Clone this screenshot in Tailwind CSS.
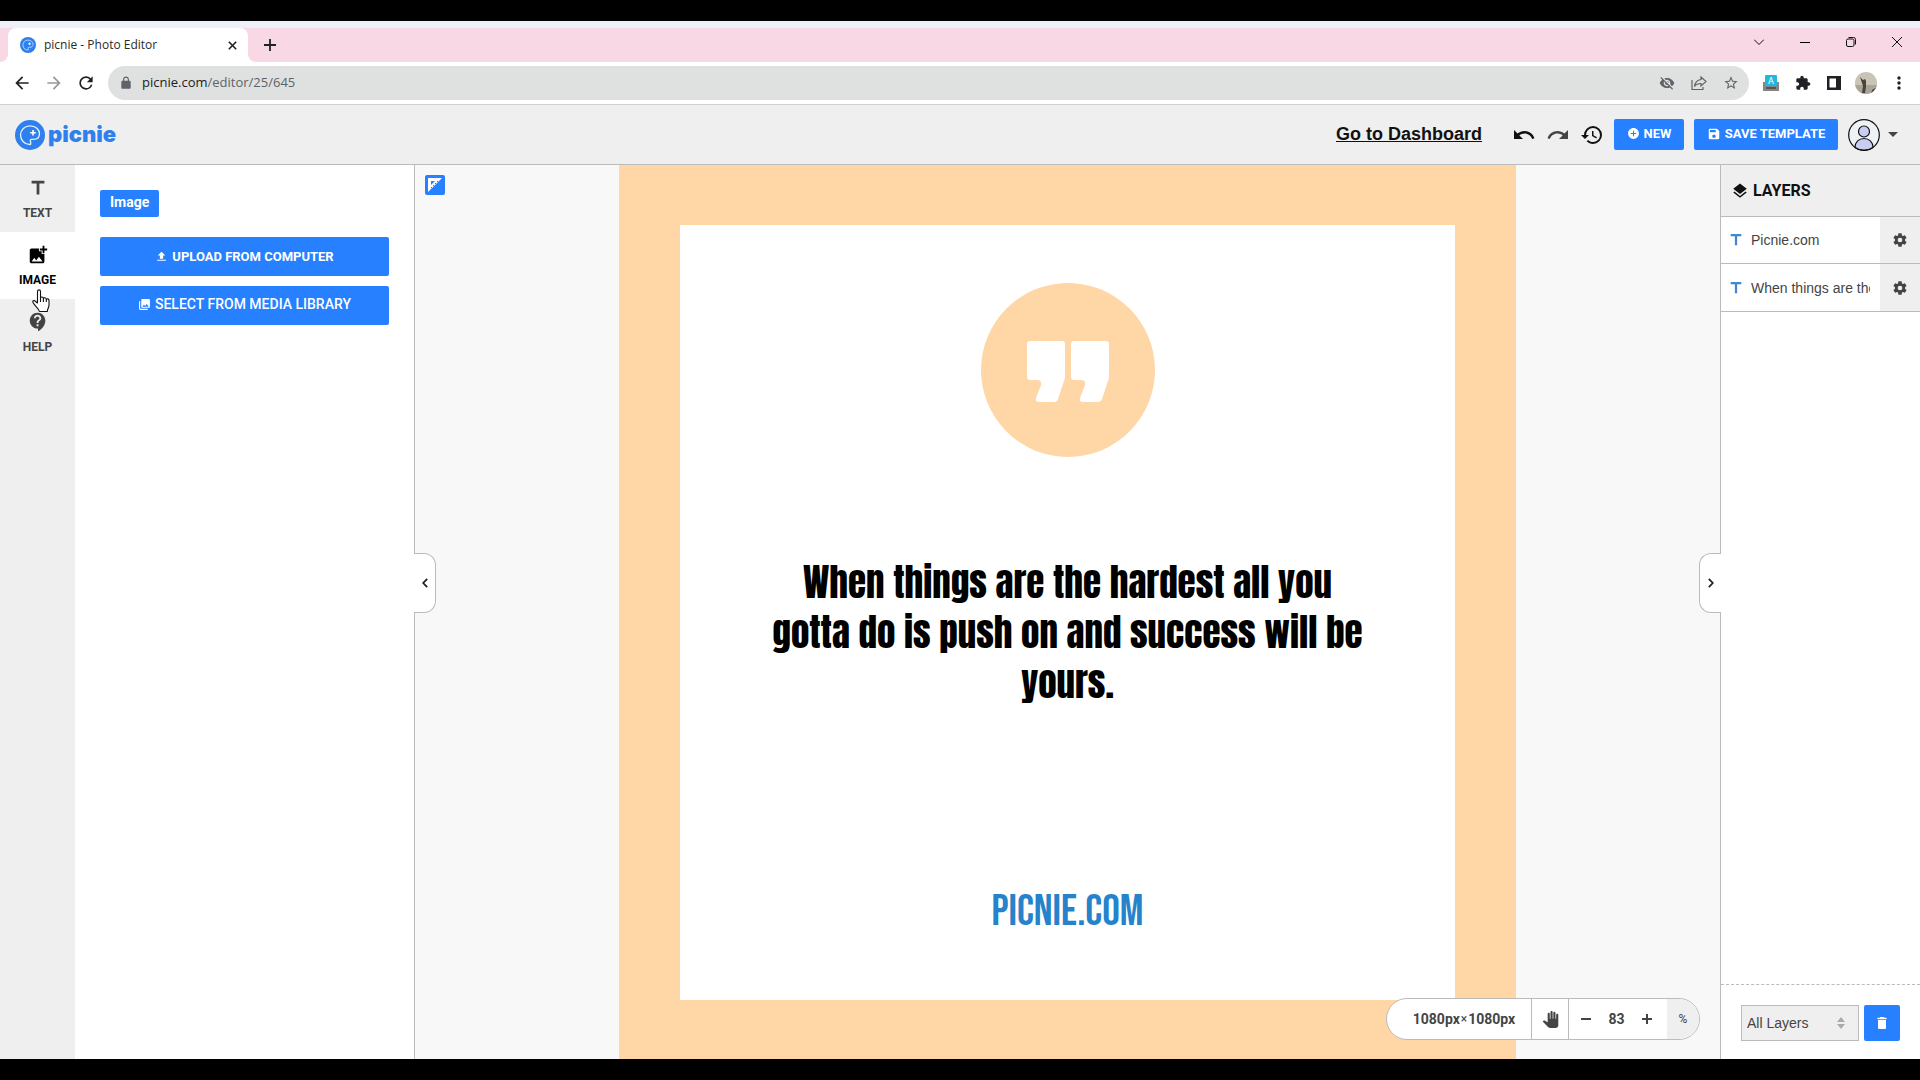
<!DOCTYPE html>
<html lang="en">
<head>
    <meta charset="UTF-8">
    <meta name="viewport" content="width=device-width, initial-scale=1.0">
    <title>picnie - Photo Editor</title>
    <script src="https://cdn.jsdelivr.net/npm/@tailwindcss/browser@4"></script>
</head>
<body class="flex h-screen flex-col overflow-hidden bg-black font-['Roboto',sans-serif] text-[#444]">

    <!-- Shared icons -->
    <svg class="hidden">
        <symbol id="palette" viewBox="0 0 30 30">
            <circle cx="15" cy="15" r="15" fill="#2f80ed"/>
            <path d="M15 24.500C9.500 24.500 5.500 20.300 5.500 15S9.700 5.800 15.200 5.800c5.400 0 9.300 3.600 9.300 8 0 3.700-2.700 5.600-6 5.600h-1.800c-1.300 0-1.600.9-1.300 1.900.5 1.700.8 3.200-.4 3.200z" fill="none" stroke="#e6f3ff" stroke-width="1.300"/>
            <path d="M18 10v5.500M15.200 12.700h5.600" stroke="#fff" stroke-width="1.600"/>
        </symbol>
        <symbol id="title" viewBox="0 0 24 24"><path d="M5 4v3h5.500v12h3V7H19V4z"/></symbol>
        <symbol id="gear" viewBox="0 0 24 24"><path d="M12,15.500A3.500,3.500 0 0,1 8.500,12A3.500,3.500 0 0,1 12,8.500A3.500,3.500 0 0,1 15.500,12A3.500,3.500 0 0,1 12,15.500M19.430,12.970C19.470,12.650 19.500,12.330 19.500,12C19.500,11.670 19.470,11.340 19.430,11L21.540,9.370C21.730,9.220 21.780,8.950 21.660,8.730L19.660,5.270C19.540,5.050 19.270,4.960 19.050,5.050L16.560,6.050C16.040,5.660 15.500,5.320 14.870,5.070L14.500,2.420C14.460,2.180 14.250,2 14,2H10C9.750,2 9.540,2.180 9.500,2.420L9.130,5.070C8.500,5.320 7.960,5.660 7.440,6.050L4.950,5.050C4.730,4.960 4.460,5.050 4.340,5.270L2.340,8.730C2.210,8.950 2.270,9.220 2.460,9.370L4.570,11C4.530,11.340 4.500,11.670 4.500,12C4.500,12.330 4.530,12.650 4.570,12.970L2.460,14.630C2.270,14.780 2.210,15.050 2.340,15.270L4.340,18.730C4.460,18.950 4.730,19.030 4.950,18.950L7.440,17.940C7.960,18.340 8.500,18.680 9.130,18.930L9.500,21.580C9.540,21.820 9.750,22 10,22H14C14.250,22 14.460,21.820 14.500,21.580L14.870,18.930C15.500,18.670 16.040,18.340 16.560,17.940L19.050,18.950C19.270,19.030 19.540,18.950 19.660,18.730L21.660,15.270C21.780,15.050 21.730,14.780 21.540,14.630L19.430,12.970Z"/></symbol>
    </svg>

    <div class="h-[21px] shrink-0"></div>

    <!-- Browser window -->
    <div class="flex min-h-0 flex-1 flex-col bg-white">

        <!-- Tab strip -->
        <div class="h-[7px] shrink-0 bg-[#edf1f7]"></div>
        <div class="flex h-[34px] shrink-0 items-stretch bg-white">
            <div class="w-2 rounded-br-lg bg-[#f8d8e4]"></div>
            <div class="flex bg-[#f8d8e4]">
                <div class="flex w-60 items-center rounded-t-lg bg-white pr-2 pl-3 font-['Open_Sans',sans-serif] text-xs text-[#2b2b2b]">
                    <svg class="size-4"><use href="#palette"/></svg>
                    <span class="ml-2 flex-1">picnie - Photo Editor</span>
                    <button aria-label="Close tab" class="grid size-4 place-items-center"><svg class="size-[9px]" viewBox="0 0 9 9" stroke="#202124" stroke-width="1.600"><path d="M.8.8l7.400 7.400M8.200.8L.8 8.200"/></svg></button>
                </div>
            </div>
            <div class="flex flex-1 items-center rounded-bl-lg bg-[#f8d8e4] pl-4">
                <button aria-label="New tab"><svg class="size-3" viewBox="0 0 12 12" stroke="#202124" stroke-width="1.800"><path d="M6 0v12M0 6h12"/></svg></button>
                <div class="ml-auto flex items-center gap-[36px] pr-[18px] pb-1.5">
                    <button aria-label="Search tabs"><svg class="size-[10px]" viewBox="0 0 10 10" fill="none" stroke="#111"><path d="M0 2.500l5 5 5-5"/></svg></button>
                    <button aria-label="Minimize"><svg class="size-[10px]" viewBox="0 0 10 10"><path d="M0 5h10v1H0z"/></svg></button>
                    <button aria-label="Restore"><svg class="size-[10px]" viewBox="0 0 10 10" fill="none" stroke="#111"><rect x=".5" y="2" width="7.500" height="7.500" rx="1.500"/><path d="M2.500.500h5a2 2 0 0 1 2 2v5"/></svg></button>
                    <button aria-label="Close"><svg class="size-[10px]" viewBox="0 0 10 10" stroke="#111"><path d="M0 0l10 10M10 0L0 10"/></svg></button>
                </div>
            </div>
        </div>

        <!-- Address bar -->
        <div class="flex h-[43px] shrink-0 items-center border-b border-[#cfcfcf] pr-[11px] pl-3 text-[#202124]">
            <button aria-label="Back"><svg class="size-5" viewBox="0 0 24 24" fill="currentColor"><path d="M20 11H7.830l5.590-5.590L12 4l-8 8 8 8 1.410-1.410L7.830 13H20z"/></svg></button>
            <button aria-label="Forward" class="ml-3 text-[#999]"><svg class="size-5" viewBox="0 0 24 24" fill="currentColor"><path d="M4 11h12.170l-5.590-5.590L12 4l8 8-8 8-1.410-1.410L16.170 13H4z"/></svg></button>
            <button aria-label="Reload" class="ml-3"><svg class="size-5" viewBox="0 0 24 24" fill="currentColor"><path d="M17.650 6.350A7.958 7.958 0 0 0 12 4a8 8 0 1 0 7.730 10h-2.080A5.990 5.990 0 0 1 12 18a6 6 0 1 1 0-12c1.660 0 3.140.69 4.220 1.780L13 11h7V4l-2.350 2.350z"/></svg></button>
            <div class="ml-3 flex h-[34px] flex-1 items-center rounded-full bg-[#dee1e0] pr-[10px] pl-[11px] text-[#5f6368]">
                <svg class="size-[14px]" viewBox="0 0 24 24" fill="currentColor"><path d="M18 8h-1V6c0-2.760-2.240-5-5-5S7 3.240 7 6v2H6c-1.100 0-2 .9-2 2v10c0 1.100.9 2 2 2h12c1.100 0 2-.9 2-2V10c0-1.100-.9-2-2-2zM9 6c0-1.660 1.340-3 3-3s3 1.340 3 3v2H9V6z"/></svg>
                <p class="ml-[9px] flex-1 font-['Open_Sans',sans-serif] text-[13px]"><span class="text-[#202124]">picnie.com</span>/editor/25/645</p>
                <div class="flex items-center gap-4">
                    <svg class="size-4" viewBox="0 0 24 24" fill="currentColor"><path d="M12 7c2.760 0 5 2.240 5 5 0 .65-.13 1.260-.36 1.830l2.920 2.920c1.510-1.260 2.700-2.890 3.430-4.750-1.730-4.390-6-7.500-11-7.500-1.400 0-2.740.25-3.980.7l2.160 2.160C10.740 7.130 11.350 7 12 7zM2 4.270l2.740 2.740C3.080 8.300 1.780 10.020 1 12c1.730 4.390 6 7.500 11 7.500 1.550 0 3.030-.3 4.380-.84L19.730 22 21 20.730 3.270 3 2 4.270zM7.530 9.800l1.550 1.550c-.05.21-.08.43-.08.65 0 1.660 1.340 3 3 3 .22 0 .44-.03.65-.08l1.550 1.550c-.67.33-1.410.53-2.200.53-2.760 0-5-2.240-5-5 0-.79.2-1.530.53-2.200zm4.310-.78l3.150 3.150.02-.16c0-1.660-1.340-3-3-3l-.17.01z"/></svg>
                    <svg class="size-4" viewBox="0 0 16 16" fill="none" stroke="currentColor" stroke-width="1.200"><path d="M1 5v9.500h11V12M10 2l5 4.500-5 4.500V8.500c-3 0-5 .8-6.500 3C4 7.500 6 5 10 4.500z"/></svg>
                    <svg class="size-4" viewBox="0 0 24 24" fill="currentColor"><path d="M22 9.240l-7.190-.62L12 2 9.190 8.630 2 9.240l5.460 4.730L5.820 21 12 17.270 18.180 21l-1.630-7.030L22 9.240zM12 15.400l-3.760 2.270 1-4.280-3.320-2.880 4.380-.38L12 6.100l1.710 4.040 4.380.38-3.320 2.880 1 4.280L12 15.400z"/></svg>
                </div>
            </div>
            <svg class="ml-[14px] h-4 w-4" viewBox="0 0 16 16"><path d="M0 7h16v9H0z" fill="#858585"/><path d="M3 12h10v2H3z" fill="#555"/><rect x="2" width="12" height="11" rx="1" fill="#22b8dc"/><text x="8" y="9" text-anchor="middle" font-size="9" fill="#fff" font-family="Roboto">A</text></svg>
            <svg class="ml-4 size-4" viewBox="0 0 24 24" fill="currentColor"><path d="M20.500 11H19V7c0-1.100-.9-2-2-2h-4V3.500C13 2.120 11.880 1 10.500 1S8 2.120 8 3.500V5H4c-1.100 0-1.990.9-1.990 2v3.800H3.500c1.490 0 2.700 1.210 2.700 2.700s-1.210 2.700-2.700 2.700H2V20c0 1.100.9 2 2 2h3.800v-1.500c0-1.490 1.210-2.700 2.700-2.700s2.700 1.210 2.700 2.700V22H17c1.100 0 2-.9 2-2v-4h1.500c1.380 0 2.500-1.120 2.500-2.500S21.880 11 20.500 11z"/></svg>
            <svg class="ml-4 size-[14px]" viewBox="0 0 14 14" fill="currentColor"><path fill-rule="evenodd" d="M0 0h14v14H0zM2.500 2.500v9H9v-9z"/></svg>
            <svg class="ml-[14px] size-[22px] rounded-full" viewBox="0 0 22 22"><path d="M0 0h22v22H0z" fill="#c9c4b6"/><path d="M0 13h22v9H0z" fill="#aaa598"/><path d="M5 5l3 3 2-1 1 2v6l-1 6H7l1-7zM17 18l5-3v8h-6z" fill="#4b423a"/></svg>
            <button aria-label="Browser menu" class="ml-3"><svg class="size-5" viewBox="0 0 20 20" fill="currentColor"><circle cx="10" cy="5" r="1.700"/><circle cx="10" cy="10" r="1.700"/><circle cx="10" cy="15" r="1.700"/></svg></button>
        </div>

        <!-- App header -->
        <header class="flex h-[60px] shrink-0 items-center border-b border-[#bbb] bg-[#efefef] pr-[22px] pl-[15px]">
            <a href="#" class="flex items-center gap-[3px]">
                <svg class="size-[30px]"><use href="#palette"/></svg>
                <span class="pb-0.5 font-['Inter',sans-serif] text-[22px] leading-7 font-black text-[#2f80ed]">picnie</span>
            </a>
            <a href="#" class="ml-auto pb-0.5 font-['Liberation_Sans',sans-serif] text-lg font-bold text-[#111] underline">Go to Dashboard</a>
            <div class="ml-[30px] flex items-center gap-2.5 text-[#111]">
                <button aria-label="Undo"><svg class="size-6" viewBox="0 0 24 24" fill="currentColor"><path d="M12.500,8C9.850,8 7.450,9 5.600,10.600L2,7V16H11L7.380,12.380C8.770,11.220 10.540,10.500 12.500,10.500C16.040,10.500 19.050,12.810 20.100,16L22.470,15.220C21.080,11.030 17.150,8 12.500,8Z"/></svg></button>
                <button aria-label="Redo" class="text-[#444]"><svg class="size-6" viewBox="0 0 24 24" fill="currentColor"><path d="M18.400,10.600C16.550,9 14.150,8 11.500,8C6.850,8 2.920,11.030 1.540,15.220L3.900,16C4.950,12.810 7.950,10.500 11.500,10.500C13.450,10.500 15.230,11.220 16.620,12.380L13,16H22V7L18.400,10.600Z"/></svg></button>
                <button aria-label="History"><svg class="size-6" viewBox="0 0 24 24" fill="currentColor"><path d="M13.500,8H12V13L16.280,15.540L17,14.330L13.500,12.250V8M13,3A9,9 0 0,0 4,12H1L4.960,16.030L9,12H6A7,7 0 0,1 13,5A7,7 0 0,1 20,12A7,7 0 0,1 13,19C11.070,19 9.320,18.210 8.060,16.940L6.640,18.360C8.270,20 10.500,21 13,21A9,9 0 0,0 22,12A9,9 0 0,0 13,3"/></svg></button>
            </div>
            <button class="ml-2.5 flex h-[31px] w-[70px] items-center justify-center gap-1 rounded-xs bg-[#2680ff] pb-0.5 text-[13px] font-bold text-white">
                <svg class="size-[13px]" viewBox="0 0 24 24" fill="currentColor"><path d="M12 2C6.480 2 2 6.480 2 12s4.480 10 10 10 10-4.480 10-10S17.520 2 12 2zm5 11h-4v4h-2v-4H7v-2h4V7h2v4h4v2z"/></svg>NEW
            </button>
            <button class="ml-2.5 flex h-[31px] w-36 items-center justify-center gap-1 rounded-xs bg-[#2680ff] pb-0.5 text-[13px] font-bold text-white">
                <svg class="size-[14px]" viewBox="0 0 24 24" fill="currentColor"><path d="M17 3H5c-1.110 0-2 .9-2 2v14c0 1.100.89 2 2 2h14c1.100 0 2-.9 2-2V7l-4-4zm-5 16c-1.660 0-3-1.340-3-3s1.340-3 3-3 3 1.340 3 3-1.340 3-3 3zm3-10H5V5h10v4z"/></svg>SAVE TEMPLATE
            </button>
            <button aria-label="Account" class="ml-2.5 flex items-center gap-2">
                <svg class="size-8" viewBox="0 0 32 32"><circle cx="16" cy="16" r="15.300" fill="#eef2f6"/><g fill="#c9cdf2" stroke="#111" stroke-width="1.200"><circle cx="16" cy="12.500" r="5.500"/><path d="M7 28.500c0-5.500 4-9 9-9s9 3.500 9 9a15.300 15.300 0 0 1-18 0z"/></g><circle cx="16" cy="16" r="15.300" fill="none" stroke="#111" stroke-width="1.200"/></svg>
                <svg class="h-[5px] w-[10px]" viewBox="0 0 10 5" fill="#444"><path d="M0 0h10L5 5z"/></svg>
            </button>
        </header>

        <!-- Editor -->
        <div class="flex min-h-0 flex-1">

            <!-- Tool tabs -->
            <nav class="relative w-[75px] shrink-0 bg-[#efefef] text-xs font-bold">
                <button class="flex h-[67px] w-full flex-col items-center gap-1.5 pt-3">
                    <svg class="size-[22px]" fill="currentColor"><use href="#title"/></svg>TEXT
                </button>
                <button class="flex h-[67px] w-full flex-col items-center gap-1.5 bg-white pt-3 text-black">
                    <svg class="size-[22px]" viewBox="0 0 24 24" fill="currentColor"><path d="M19 7v3h-2V7h-3V5h3V2h2v3h3v2h-3zm-3 4V8h-3V5H5c-1.100 0-2 .9-2 2v12c0 1.100.9 2 2 2h12c1.100 0 2-.9 2-2v-8h-3zM5 19l3-4 2 3 3-4 4 5H5z"/></svg>IMAGE
                </button>
                <button class="flex h-[67px] w-full flex-col items-center gap-1.5 pt-3">
                    <svg class="size-[22px]" viewBox="0 0 24 24" fill="currentColor"><path d="M11.500 2C6.810 2 3 5.810 3 10.500S6.810 19 11.500 19h.5v3c4.860-2.340 8-7 8-11.500C20 5.810 16.190 2 11.500 2zm1 14.500h-2v-2h2v2zm0-3.500h-2c0-3.250 3-3 3-5 0-1.100-.9-2-2-2s-2 .9-2 2h-2c0-2.210 1.790-4 4-4s4 1.790 4 4c0 2.500-3 2.750-3 5z"/></svg>HELP
                </button>
                <!-- Hand cursor -->
                <svg class="absolute top-[124px] left-8 h-6 w-[18px]" viewBox="0 0 18 24" fill="#fff" stroke="#111" stroke-width="1.100" stroke-linejoin="round"><path d="M5.500 14V2.500C5.500.3 8.500.3 8.500 2.500V9c.3-1.500 2.800-1.300 2.900.5.500-1.200 2.800-.9 2.900.8.700-.9 2.700-.6 2.700 1.200V16c0 2.500-1.500 3.500-1.700 6.500H7.500C7 20 3 17 1 13.500c-.7-1.500 1-2.500 2.300-1.300z"/><path d="M8.500 9v4M11.400 9.500V13M14.300 10.300V13"/></svg>
            </nav>

            <!-- Image panel -->
            <aside class="flex w-[340px] shrink-0 flex-col items-start border-r border-[#bbb] px-[25px] pt-[25px]">
                <h2 class="h-[27px] rounded-xs bg-[#2680ff] px-2.5 text-sm leading-[25px] font-bold text-white">Image</h2>
                <button class="mt-5 flex h-[39px] w-full items-center justify-center gap-1 rounded-xs bg-[#2680ff] text-[13px] font-bold text-white">
                    <svg class="size-[13px]" viewBox="0 0 24 24" fill="currentColor"><path d="M9 16h6v-6h4l-7-7-7 7h4zm-5 2h16v2H4z"/></svg>UPLOAD FROM COMPUTER
                </button>
                <button class="mt-2.5 flex h-[39px] w-full items-center justify-center gap-1 rounded-xs bg-[#2680ff] pb-[3px] text-sm font-medium text-white">
                    <svg class="size-[13px]" viewBox="0 0 24 24" fill="currentColor"><path d="M22 16V4c0-1.100-.9-2-2-2H8c-1.100 0-2 .9-2 2v12c0 1.100.9 2 2 2h12c1.100 0 2-.9 2-2zm-11-4l2.030 2.710L16 11l4 5H8l3-4zM2 6v14c0 1.100.9 2 2 2h14v-2H4V6H2z"/></svg>SELECT FROM MEDIA LIBRARY
                </button>
            </aside>

            <!-- Workspace -->
            <main class="relative flex min-w-0 flex-1 justify-center bg-[#f8f8f8]">
                <button aria-label="Toggle ruler" class="absolute top-[10px] left-[10px] grid size-5 place-items-center rounded-xs bg-[#2680ff]">
                    <svg class="size-[14px]" viewBox="0 0 14 14"><path fill="#fff" fill-rule="evenodd" d="M0 0h14L0 14zM3 3v4l4-4z"/><path d="M3 9l1 1M5 7l1 1M7 5l1 1M9 3l1 1" stroke="#2680ff"/></svg>
                </button>
                <button aria-label="Collapse panel" class="absolute top-[388px] -left-px grid h-[60px] w-[22px] place-items-center rounded-r-xl border border-l-0 border-[#bbb] bg-white">
                    <svg class="h-[10px] w-[6px]" viewBox="0 0 6 10" fill="none" stroke="#222" stroke-width="1.800"><path d="M5.200.8L1.200 5l4 4.200"/></svg>
                </button>
                <button aria-label="Collapse layers" class="absolute top-[388px] -right-px grid h-[60px] w-[22px] place-items-center rounded-l-xl border border-r-0 border-[#bbb] bg-white">
                    <svg class="h-[10px] w-[6px]" viewBox="0 0 6 10" fill="none" stroke="#222" stroke-width="1.800"><path d="M.8.8l4 4.200-4 4.200"/></svg>
                </button>

                <!-- Artboard -->
                <div class="flex w-[897px] bg-[#ffd6a6] px-[61px] pt-[60px] pb-[59px]">
                    <div class="flex flex-1 flex-col items-center bg-white pt-[58px]">
                        <svg class="size-[174px] shrink-0" viewBox="0 0 174 174"><circle cx="87" cy="87" r="87" fill="#ffd6a6"/><path id="mark" fill="#fff" d="M49 58h32q3 0 3 3v34l-7 21q-1 3-4 3H58q-4 0-3-4l5-13q1-5-4-5h-7q-3 0-3-3V61q0-3 3-3z"/><use href="#mark" x="44"/></svg>
                        <p class="mt-[100px] w-[600px] text-center font-['Anton','Roboto_Condensed',sans-serif] text-[37px] leading-[50px] text-black">When things are the hardest all you gotta do is push on and success will be yours.</p>
                        <p class="mt-[179px] font-['Bebas_Neue','Roboto_Condensed',sans-serif] text-[44px] leading-[52px] text-[#2683cb]">PICNIE.COM</p>
                    </div>
                </div>

                <!-- Zoom bar -->
                <div class="absolute right-5 bottom-[19px] flex h-[42px] w-[314px] items-stretch overflow-hidden rounded-full border border-[#bbb] bg-white text-sm font-bold">
                    <div class="flex flex-1 items-center justify-center gap-px border-r border-[#bbb] pl-2.5">1080px<span class="text-xs font-normal">×</span>1080px</div>
                    <button aria-label="Pan" class="grid w-[37px] place-items-center border-r border-[#bbb]"><svg class="size-[17px]" viewBox="0 0 24 24" fill="currentColor"><path d="M23 5.500V20c0 2.200-1.800 4-4 4h-7.300c-1.080 0-2.100-.43-2.850-1.190L1 14.830s1.260-1.230 1.300-1.250c.22-.19.49-.29.79-.29.22 0 .42.06.6.16.04.01 4.310 2.460 4.310 2.460V4c0-.83.67-1.500 1.500-1.500S11 3.170 11 4v7h1V1.500c0-.83.67-1.500 1.500-1.500S15 .67 15 1.500V11h1V2.500c0-.83.67-1.500 1.500-1.500s1.500.67 1.500 1.500V11h1V5.500c0-.83.67-1.500 1.500-1.500s1.500.67 1.500 1.500z"/></svg></button>
                    <div class="flex w-[98px] items-center justify-between pr-[15px] pl-3">
                        <button aria-label="Zoom out"><svg class="size-[10px]" viewBox="0 0 10 10" fill="currentColor"><path d="M0 4h10v2H0z"/></svg></button>
                        <input aria-label="Zoom" value="83" class="w-8 text-center outline-none">
                        <button aria-label="Zoom in"><svg class="size-[10px]" viewBox="0 0 10 10" fill="currentColor"><path d="M4 0h2v4h4v2H6v4H4V6H0V4h4z"/></svg></button>
                    </div>
                    <div class="flex w-8 items-center justify-center bg-[#efefef] text-xs font-normal">%</div>
                </div>
            </main>

            <!-- Layers -->
            <aside class="flex w-[200px] shrink-0 flex-col border-l border-[#bbb] bg-white">
                <h2 class="flex h-[52px] items-center gap-1 border-b border-[#bbb] bg-[#efefef] pl-2.5 text-base font-bold text-[#111]">
                    <svg class="size-[18px]" viewBox="0 0 24 24" fill="currentColor"><path d="M11.990 18.540l-7.370-5.730L3 14.070l9 7 9-7-1.630-1.270-7.380 5.740zM12 16l7.360-5.730L21 9l-9-7-9 7 1.630 1.270L12 16z"/></svg>LAYERS
                </h2>
                <ul class="font-['Liberation_Sans',sans-serif] text-sm">
                    <li class="flex h-[47px] items-center border-b border-[#bbb]">
                        <svg class="ml-1.5 size-[18px] shrink-0" fill="#3f87d0"><use href="#title"/></svg>
                        <span class="mr-2.5 ml-1.5 flex-1 overflow-hidden whitespace-nowrap">Picnie.com</span>
                        <button aria-label="Layer settings" class="grid h-full w-10 shrink-0 place-items-center bg-[#efefef]"><svg class="size-4" fill="currentColor"><use href="#gear"/></svg></button>
                    </li>
                    <li class="flex h-12 items-center border-b border-[#bbb]">
                        <svg class="ml-1.5 size-[18px] shrink-0" fill="#3f87d0"><use href="#title"/></svg>
                        <span class="mr-2.5 ml-1.5 flex-1 overflow-hidden whitespace-nowrap">When things are the hardest</span>
                        <button aria-label="Layer settings" class="grid h-full w-10 shrink-0 place-items-center bg-[#efefef]"><svg class="size-4" fill="currentColor"><use href="#gear"/></svg></button>
                    </li>
                </ul>
                <div class="mt-auto flex gap-[5px] border-t border-dashed border-[#bbb] px-5 pt-5 pb-[18px]">
                    <div class="relative flex-1">
                        <select aria-label="Layer filter" class="h-9 w-full appearance-none border border-[#bbb] bg-[#efefef] pl-[5px] font-['Liberation_Sans',sans-serif] text-sm"><option>All Layers</option></select>
                        <svg class="pointer-events-none absolute top-3 right-3.5 h-3 w-2" viewBox="0 0 8 12" fill="#aaa"><path d="M4 0l4 5H0zM0 7h8l-4 5z"/></svg>
                    </div>
                    <button aria-label="Delete layer" class="grid h-9 w-9 place-items-center rounded-xs bg-[#2680ff] text-white"><svg class="size-4" viewBox="0 0 24 24" fill="currentColor"><path d="M6 19c0 1.100.9 2 2 2h8c1.100 0 2-.9 2-2V7H6v12zM19 4h-3.500l-1-1h-5l-1 1H5v2h14V4z"/></svg></button>
                </div>
            </aside>
        </div>
    </div>

    <div class="h-[21px] shrink-0"></div>
</body>
</html>
